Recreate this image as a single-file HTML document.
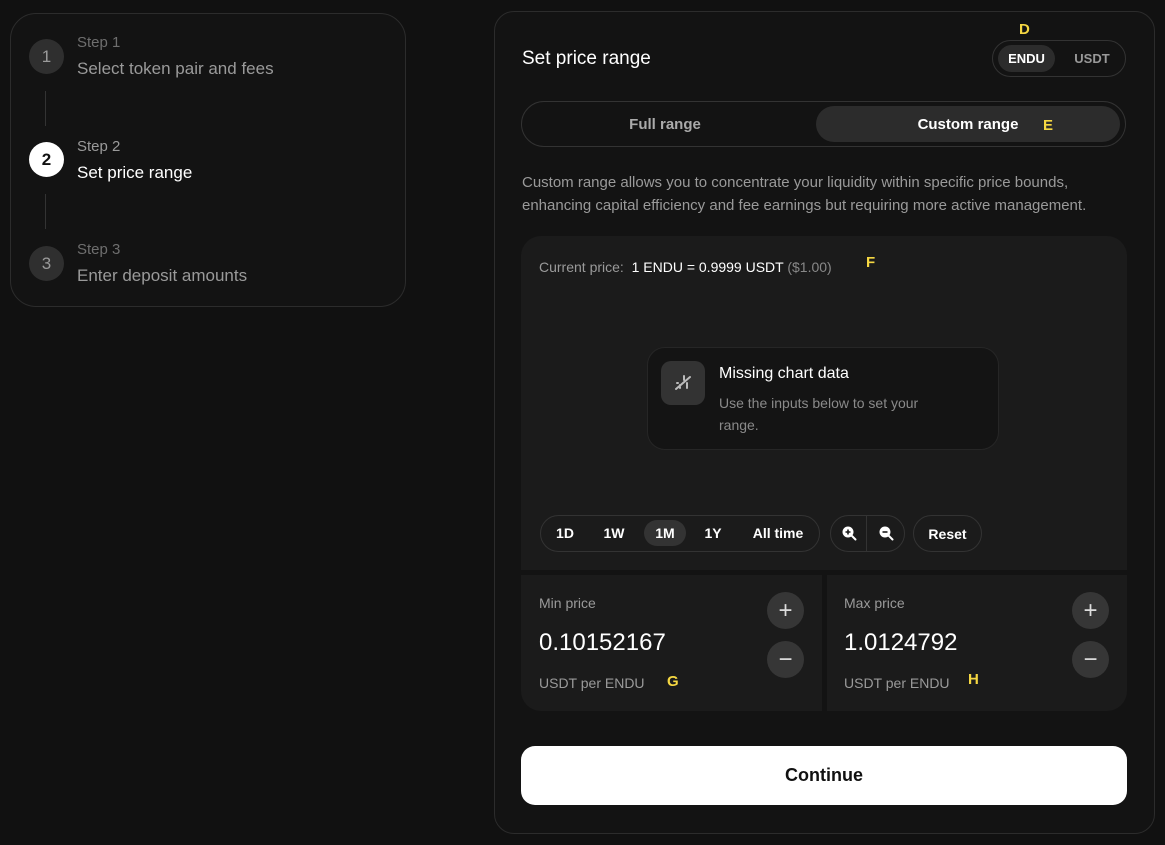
<!DOCTYPE html>
<html><head><style>
*{box-sizing:border-box;margin:0;padding:0}
body{width:1165px;height:845px;background:#111;font-family:"Liberation Sans",sans-serif;color:#fff;position:relative;overflow:hidden}
.abs{position:absolute}
.card{border:1px solid #2c2c2c;background:#131313}
.circ{width:35px;height:35px;border-radius:50%;background:#2f2f2f;color:#9a9a9a;display:flex;align-items:center;justify-content:center;font-size:17px}
.lab{font-size:15px;color:#6e6e6e}
.ttl{font-size:17px;color:#9a9a9a}
.vl{width:1px;height:35px;background:#333;left:45px}
.y{color:#f5d742;font-weight:bold;font-size:15px}
.pill{border:1px solid #333;border-radius:22px}
.btn{display:flex;align-items:center;justify-content:center}
.pm{width:37px;height:37px;border-radius:50%;background:#363636;color:#ddd;font-size:24px}
</style></head><body>
<div class="abs card" style="left:10px;top:13px;width:396px;height:294px;border-radius:26px"></div>
<div class="abs circ" style="left:29px;top:39px">1</div>
<div class="abs lab" style="left:77px;top:34px">Step 1</div>
<div class="abs ttl" style="left:77px;top:59px">Select token pair and fees</div>
<div class="abs vl" style="top:91px"></div>
<div class="abs circ" style="left:29px;top:142px;background:#fff;color:#111;font-weight:bold">2</div>
<div class="abs lab" style="left:77px;top:138px;color:#9a9a9a">Step 2</div>
<div class="abs ttl" style="left:77px;top:163px;color:#fff">Set price range</div>
<div class="abs vl" style="top:194px"></div>
<div class="abs circ" style="left:29px;top:246px">3</div>
<div class="abs lab" style="left:77px;top:241px">Step 3</div>
<div class="abs ttl" style="left:77px;top:266px">Enter deposit amounts</div>

<div class="abs card" style="left:494px;top:11px;width:661px;height:823px;border-radius:20px"></div>
<div class="abs" style="left:522px;top:48px;font-size:19px">Set price range</div>
<div class="abs y" style="left:1019px;top:21px">D</div>
<div class="abs pill" style="left:992px;top:40px;width:134px;height:37px"></div>
<div class="abs btn" style="left:998px;top:45px;width:57px;height:27px;border-radius:14px;background:#2c2c2c;font-size:13px;font-weight:bold">ENDU</div>
<div class="abs btn" style="left:1062px;top:45px;width:60px;height:27px;font-size:13px;color:#999;font-weight:bold">USDT</div>

<div class="abs pill" style="left:521px;top:101px;width:605px;height:46px;border-radius:23px"></div>
<div class="abs btn" style="left:525px;top:106px;width:280px;height:36px;font-size:15px;color:#aaa;font-weight:bold">Full range</div>
<div class="abs btn" style="left:816px;top:106px;width:304px;height:36px;border-radius:18px;background:#2c2c2c;font-size:15px;font-weight:bold">Custom range</div>
<div class="abs y" style="left:1043px;top:117px">E</div>

<div class="abs" style="left:522px;top:171px;font-size:15px;line-height:23px;color:#9a9a9a;width:600px">Custom range allows you to concentrate your liquidity within specific price bounds, enhancing capital efficiency and fee earnings but requiring more active management.</div>

<div class="abs" style="left:521px;top:236px;width:606px;height:475px;border-radius:20px;background:#1b1b1b;overflow:hidden">
 <div class="abs" style="left:0;top:334px;width:606px;height:5px;background:#131313"></div>
 <div class="abs" style="left:301px;top:334px;width:5px;height:141px;background:#131313"></div>
</div>
<div class="abs" style="left:539px;top:259px;font-size:14px;color:#9a9a9a">Current price: &nbsp;<span style="color:#fff">1 ENDU = 0.9999 USDT</span> <span style="color:#888">($1.00)</span></div>
<div class="abs y" style="left:866px;top:254px">F</div>

<div class="abs" style="left:647px;top:347px;width:352px;height:103px;border-radius:18px;background:#141414;border:1px solid #262626"></div>
<div class="abs btn" style="left:661px;top:361px;width:44px;height:44px;border-radius:10px;background:#333">
<svg width="22" height="22" viewBox="0 0 22 22" fill="none" stroke="#bbb" stroke-width="2" stroke-linecap="round"><path d="M4 17L18 5M12 4v4M8 13v3M15 11v5M5 11h1"/></svg></div>
<div class="abs" style="left:719px;top:365px;font-size:16px">Missing chart data</div>
<div class="abs" style="left:719px;top:392px;font-size:14px;line-height:22px;color:#8a8a8a;width:240px">Use the inputs below to set your range.</div>

<div class="abs pill" style="left:540px;top:515px;width:280px;height:37px"></div>
<div class="abs btn" style="left:548px;top:520px;width:34px;height:26px;font-size:14px;font-weight:bold">1D</div>
<div class="abs btn" style="left:597px;top:520px;width:34px;height:26px;font-size:14px;font-weight:bold">1W</div>
<div class="abs btn" style="left:644px;top:520px;width:42px;height:26px;border-radius:13px;background:#333;font-size:14px;font-weight:bold">1M</div>
<div class="abs btn" style="left:696px;top:520px;width:34px;height:26px;font-size:14px;font-weight:bold">1Y</div>
<div class="abs btn" style="left:745px;top:520px;width:66px;height:26px;font-size:14px;font-weight:bold">All time</div>
<div class="abs pill" style="left:830px;top:515px;width:75px;height:37px"></div>
<div class="abs" style="left:866px;top:515px;width:1px;height:37px;background:#333"></div>
<svg class="abs" style="left:841px;top:525px" width="16" height="16" viewBox="0 0 16 16"><circle cx="7" cy="7" r="5.5" fill="#fff"/><path d="M11 11l3.5 3.5" stroke="#fff" stroke-width="2" stroke-linecap="round"/><path d="M4.5 7h5M7 4.5v5" stroke="#1b1b1b" stroke-width="1.6"/></svg>
<svg class="abs" style="left:878px;top:525px" width="16" height="16" viewBox="0 0 16 16"><circle cx="7" cy="7" r="5.5" fill="#fff"/><path d="M11 11l3.5 3.5" stroke="#fff" stroke-width="2" stroke-linecap="round"/><path d="M4.5 7h5" stroke="#1b1b1b" stroke-width="1.6"/></svg>
<div class="abs pill btn" style="left:913px;top:515px;width:69px;height:37px;font-size:14px;font-weight:bold">Reset</div>

<div class="abs" style="left:539px;top:595px;font-size:14px;color:#9a9a9a">Min price</div>
<div class="abs" style="left:539px;top:629px;font-size:24px">0.10152167</div>
<div class="abs" style="left:539px;top:675px;font-size:14px;color:#9a9a9a">USDT per ENDU</div>
<div class="abs y" style="left:667px;top:673px">G</div>
<div class="abs btn pm" style="left:767px;top:592px">+</div>
<div class="abs btn pm" style="left:767px;top:641px">−</div>
<div class="abs" style="left:844px;top:595px;font-size:14px;color:#9a9a9a">Max price</div>
<div class="abs" style="left:844px;top:629px;font-size:24px">1.0124792</div>
<div class="abs" style="left:844px;top:675px;font-size:14px;color:#9a9a9a">USDT per ENDU</div>
<div class="abs y" style="left:968px;top:671px">H</div>
<div class="abs btn pm" style="left:1072px;top:592px">+</div>
<div class="abs btn pm" style="left:1072px;top:641px">−</div>

<div class="abs btn" style="left:521px;top:746px;width:606px;height:59px;border-radius:14px;background:#fff;color:#111;font-size:18px;font-weight:bold">Continue</div>
</body></html>
